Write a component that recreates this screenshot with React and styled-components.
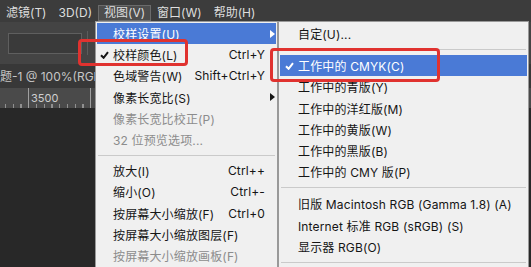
import React from 'react'
import styled, { createGlobalStyle } from 'styled-components'

const GlobalStyle = createGlobalStyle`
  html, body {
    margin: 0;
    padding: 0;
    width: 531px;
    height: 267px;
    overflow: hidden;
    background: #282828;
  }
  body {
    font-family: "Inter", "Noto Sans CJK SC", sans-serif;
    font-size: 12px;
  }
`

const Screen = styled.div`
  position: relative;
  width: 531px;
  height: 267px;
  overflow: hidden;
  display: flex;
  flex-direction: column;
  background: #282828;
`

const MenuBar = styled.div`
  height: 22px;
  box-sizing: border-box;
  padding-top: 5px;
  display: flex;
  background: #3c3c3c;
`

const BarItem = styled.div`
  height: 16px;
  line-height: 14px;
  padding: 0 5px;
  box-sizing: border-box;
  white-space: nowrap;
  color: #dedede;
  border: 1px solid ${p => (p.$open ? '#6b6b6b' : 'transparent')};
  background: ${p => (p.$open ? '#4d4d4d' : 'transparent')};
`

const OptionsBar = styled.div`
  height: 42px;
  display: flex;
  align-items: center;
  gap: 5px;
  padding-left: 8px;
  background: #444444;
`

const FieldBox = styled.div`
  width: 74px;
  height: 21px;
  box-sizing: border-box;
  border: 1px solid #5f5f5f;
  background: #3a3a3a;
`

const VRule = styled.div`
  width: 1px;
  height: 24px;
  background: #5c5c5c;
`

const DocTab = styled.div`
  height: 24px;
  line-height: 26px;
  background: #383838;
  color: #c6c6c6;
  white-space: nowrap;
`

const Ruler = styled.div`
  height: 20px;
  line-height: 20px;
  padding-left: 31px;
  font-size: 11px;
  color: #cfcfcf;
  background:
    linear-gradient(90deg, transparent 28px, #a0a0a0 28px 29px, transparent 29px 90px, #a0a0a0 90px 91px, transparent 91px) no-repeat,
    repeating-linear-gradient(90deg, #909090 0 1px, transparent 1px 7.75px) 5px 100% / 100% 4px no-repeat,
    #4a4a4a;
`

const Canvas = styled.div`
  flex: 1;
  background: #282828;
`

const MenuLayer = styled.div`
  position: absolute;
  top: 21px;
  left: 95px;
  display: flex;
  align-items: flex-start;
`

const Panel = styled.div`
  width: ${p => p.$w}px;
  height: 260px;
  box-sizing: border-box;
  padding: 1px 1px;
  background: #f0f0f0;
  border: 1px solid #999999;
  color: #151515;
`

const Row = styled.div`
  display: grid;
  grid-template-columns: ${p => p.$lead}px 1fr auto 11px;
  align-items: center;
  height: 21.2px;
  white-space: nowrap;
  letter-spacing: 0.15px;
  background: ${p => (p.$active ? '#4a7ad6' : 'transparent')};
  color: ${p => (p.$active ? '#ffffff' : p.$disabled ? '#8c8c8c' : '#151515')};
`

const CheckCell = styled.div`
  display: flex;
  align-items: center;
  padding-left: ${p => p.$pad}px;
`

const Shortcut = styled.span`
  text-align: right;
`

const ArrowCell = styled.div`
  display: flex;
  justify-content: flex-end;
  padding-right: 1px;
`

const Separator = styled.div`
  height: ${p => p.$h}px;
  display: flex;
  align-items: center;
  &::after {
    content: '';
    flex: 1;
    height: 1px;
    margin: 0 1px;
    background: #cacaca;
  }
`

const Callout = styled.div`
  position: absolute;
  left: ${p => p.$x}px;
  top: ${p => p.$y}px;
  width: ${p => p.$w}px;
  height: ${p => p.$h}px;
  box-sizing: border-box;
  border: 3px solid #e0322f;
  border-radius: 4px;
`

const Check = ({ color }) => (
  <svg width="9" height="8" viewBox="0 0 9 8">
    <path d="M1 4.2 L3.6 6.8 L8 1.2" fill="none" stroke={color} strokeWidth="2" />
  </svg>
)

const Arrow = ({ color }) => (
  <svg width="5" height="8" viewBox="0 0 5 8">
    <polygon points="0,0 5,4 0,8" fill={color} />
  </svg>
)

const viewMenu = [
  { label: '校样设置(U)', sub: true, active: true },
  { label: '校样颜色(L)', key: 'Ctrl+Y', checked: true },
  { label: '色域警告(W)', key: 'Shift+Ctrl+Y' },
  { label: '像素长宽比(S)', sub: true },
  { label: '像素长宽比校正(P)', disabled: true },
  { label: '32 位预览选项...', disabled: true },
  { sep: 10 },
  { label: '放大(I)', key: 'Ctrl++' },
  { label: '缩小(O)', key: 'Ctrl+-' },
  { label: '按屏幕大小缩放(F)', key: 'Ctrl+0' },
  { label: '按屏幕大小缩放图层(F)' },
  { label: '按屏幕大小缩放画板(F)', disabled: true },
]

const proofMenu = [
  { label: '自定(U)...' },
  { sep: 11 },
  { label: '工作中的 CMYK(C)', checked: true, active: true },
  { label: '工作中的青版(Y)' },
  { label: '工作中的洋红版(M)' },
  { label: '工作中的黄版(W)' },
  { label: '工作中的黑版(B)' },
  { label: '工作中的 CMY 版(P)' },
  { sep: 11 },
  { label: '旧版 Macintosh RGB (Gamma 1.8) (A)' },
  { label: 'Internet 标准 RGB (sRGB) (S)' },
  { label: '显示器 RGB(O)' },
  { sep: 11 },
]

const Menu = ({ items, width, lead, checkPad }) => (
  <Panel $w={width}>
    {items.map((it, i) => {
      if (it.sep) return <Separator key={i} $h={it.sep} />
      const ink = it.active ? '#ffffff' : '#151515'
      return (
        <Row key={i} $lead={lead} $active={it.active} $disabled={it.disabled}>
          <CheckCell $pad={checkPad}>{it.checked && <Check color={ink} />}</CheckCell>
          <span>{it.label}</span>
          <Shortcut>{it.key}</Shortcut>
          <ArrowCell>{it.sub && <Arrow color={ink} />}</ArrowCell>
        </Row>
      )
    })}
  </Panel>
)

export default function App() {
  return (
    <>
      <GlobalStyle />
      <Screen>
        <MenuBar>
          <BarItem>滤镜(T)</BarItem>
          <BarItem>3D(D)</BarItem>
          <BarItem $open>视图(V)</BarItem>
          <BarItem>窗口(W)</BarItem>
          <BarItem>帮助(H)</BarItem>
        </MenuBar>
        <OptionsBar>
          <FieldBox />
          <VRule />
        </OptionsBar>
        <DocTab>题-1 @ 100%(RGB/8)</DocTab>
        <Ruler>3500</Ruler>
        <Canvas />

        <MenuLayer>
          <Menu items={viewMenu} width={183} lead={16} checkPad={3} />
          <Menu items={proofMenu} width={251} lead={18} checkPad={5} />
        </MenuLayer>

        <Callout $x={78} $y={39} $w={110} $h={27} />
        <Callout $x={270} $y={48} $w={170} $h={34} />
      </Screen>
    </>
  )
}
